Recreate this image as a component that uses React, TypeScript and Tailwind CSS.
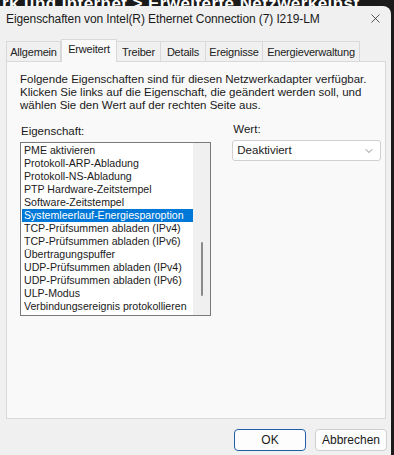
import { X, ChevronDown } from "lucide-react";

const tabs: [string, string][] = [
  ["Allgemein", "w-[55px]"],
  ["Erweitert", "w-[56px]"],
  ["Treiber", "w-[44px]"],
  ["Details", "w-[45px]"],
  ["Ereignisse", "w-[57px]"],
  ["Energieverwaltung", "w-[97px]"],
];

const items = [
  "PME aktivieren",
  "Protokoll-ARP-Abladung",
  "Protokoll-NS-Abladung",
  "PTP Hardware-Zeitstempel",
  "Software-Zeitstempel",
  "Systemleerlauf-Energiesparoption",
  "TCP-Prüfsummen abladen (IPv4)",
  "TCP-Prüfsummen abladen (IPv6)",
  "Übertragungspuffer",
  "UDP-Prüfsummen abladen (IPv4)",
  "UDP-Prüfsummen abladen (IPv6)",
  "ULP-Modus",
  "Verbindungsereignis protokollieren",
];

export default function App() {
  return (
    <div className="w-[394px] h-[455px] overflow-hidden bg-[#1a1a1a] font-['Liberation_Sans',sans-serif] text-[#1a1a1a]">
      {/* desktop behind the dialog */}
      <div className="h-[6px] overflow-hidden">
        <div className="-mt-[9px] pl-[2px] text-[17px] font-bold text-white whitespace-nowrap tracking-wide">
          rk und Internet &gt; Erweiterte Netzwerkeinst
        </div>
      </div>

      <div className="h-[449px] bg-[#f0f0f0] rounded-tr-[8px] mr-[3px] flex flex-col">
        {/* title bar */}
        <div className="h-[25px] flex items-center justify-between pl-[6px] pr-[8px]">
          <span className="text-[12px] tracking-[-0.1px]">Eigenschaften von Intel(R) Ethernet Connection (7) I219-LM</span>
          <X size={15} strokeWidth={1.2} className="text-[#222]" />
        </div>

        {/* tabs */}
        <div className="mt-[9px] pl-[6px] flex items-end h-[21px] relative z-10">
          {tabs.map(([t, w]) =>
            t === "Erweitert" ? (
              <div
                key={t}
                className={`${w} h-[23px] -mb-px pb-[3px] flex items-center justify-center bg-[#f9f9f9] border border-b-0 border-[#d9d9d9] text-[11px] tracking-[-0.2px]`}
              >
                {t}
              </div>
            ) : (
              <div
                key={t}
                className={`${w} h-[20px] pt-[1px] flex items-center justify-center border border-b-0 border-l-0 first:border-l border-[#d9d9d9] text-[11px] tracking-[-0.2px] text-[#222]`}
              >
                {t}
              </div>
            )
          )}
        </div>

        {/* panel */}
        <div className="ml-[6px] mr-[5px] h-[358px] bg-[#f9f9f9] border border-[#d9d9d9] pl-[13px] pr-[4px] pt-[11px] text-[11px]">
          <p className="leading-[13px] text-[11.5px]">
            Folgende Eigenschaften sind für diesen Netzwerkadapter verfügbar.
            <br />
            Klicken Sie links auf die Eigenschaft, die geändert werden soll, und
            <br />
            wählen Sie den Wert auf der rechten Seite aus.
          </p>

          <div className="mt-[13px] flex">
            <div className="w-[193px]">
              <div className="leading-[13px] pl-px text-[11.5px]">Eigenschaft:</div>
              <div className="mt-[4px] h-[174px] border border-[#7a7a7a] bg-white flex">
                <ul className="flex-1 pt-px pl-px text-[10.6px]">
                  {items.map((it) => (
                    <li
                      key={it}
                      className={
                        it === "Systemleerlauf-Energiesparoption"
                          ? "h-[13px] leading-[13px] pl-[2px] bg-[#0078d7] text-white whitespace-nowrap"
                          : "h-[13px] leading-[13px] pl-[2px] whitespace-nowrap"
                      }
                    >
                      {it}
                    </li>
                  ))}
                </ul>
                <div className="w-[17px] bg-[#f0f0f0] flex justify-center pt-[99px]">
                  <div className="w-[2px] h-[54px] bg-[#8a8a8a] rounded-full" />
                </div>
              </div>
            </div>

            <div className="ml-[21px] w-[150px] -mt-[2px]">
              <div className="leading-[13px] pl-px text-[11.5px]">Wert:</div>
              <div className="mt-[4px] h-[21px] border border-[#d0d0d0] rounded-[3px] bg-white flex items-center justify-between pl-[4px] pr-[5px] text-[11.5px]">
                <span>Deaktiviert</span>
                <ChevronDown size={12} strokeWidth={1.2} className="text-[#444]" />
              </div>
            </div>
          </div>
        </div>

        {/* buttons */}
        <div className="mt-[10px] flex justify-end gap-[9px] pr-[4px]">
          <button className="w-[72px] h-[22px] rounded-[4px] border-[1.5px] border-[#1f5fa8] bg-[#fdfdfd] text-[12px]">
            OK
          </button>
          <button className="w-[72px] h-[22px] rounded-[4px] border border-[#cfcfcf] bg-[#fdfdfd] text-[12px]">
            Abbrechen
          </button>
        </div>
      </div>
    </div>
  );
}
